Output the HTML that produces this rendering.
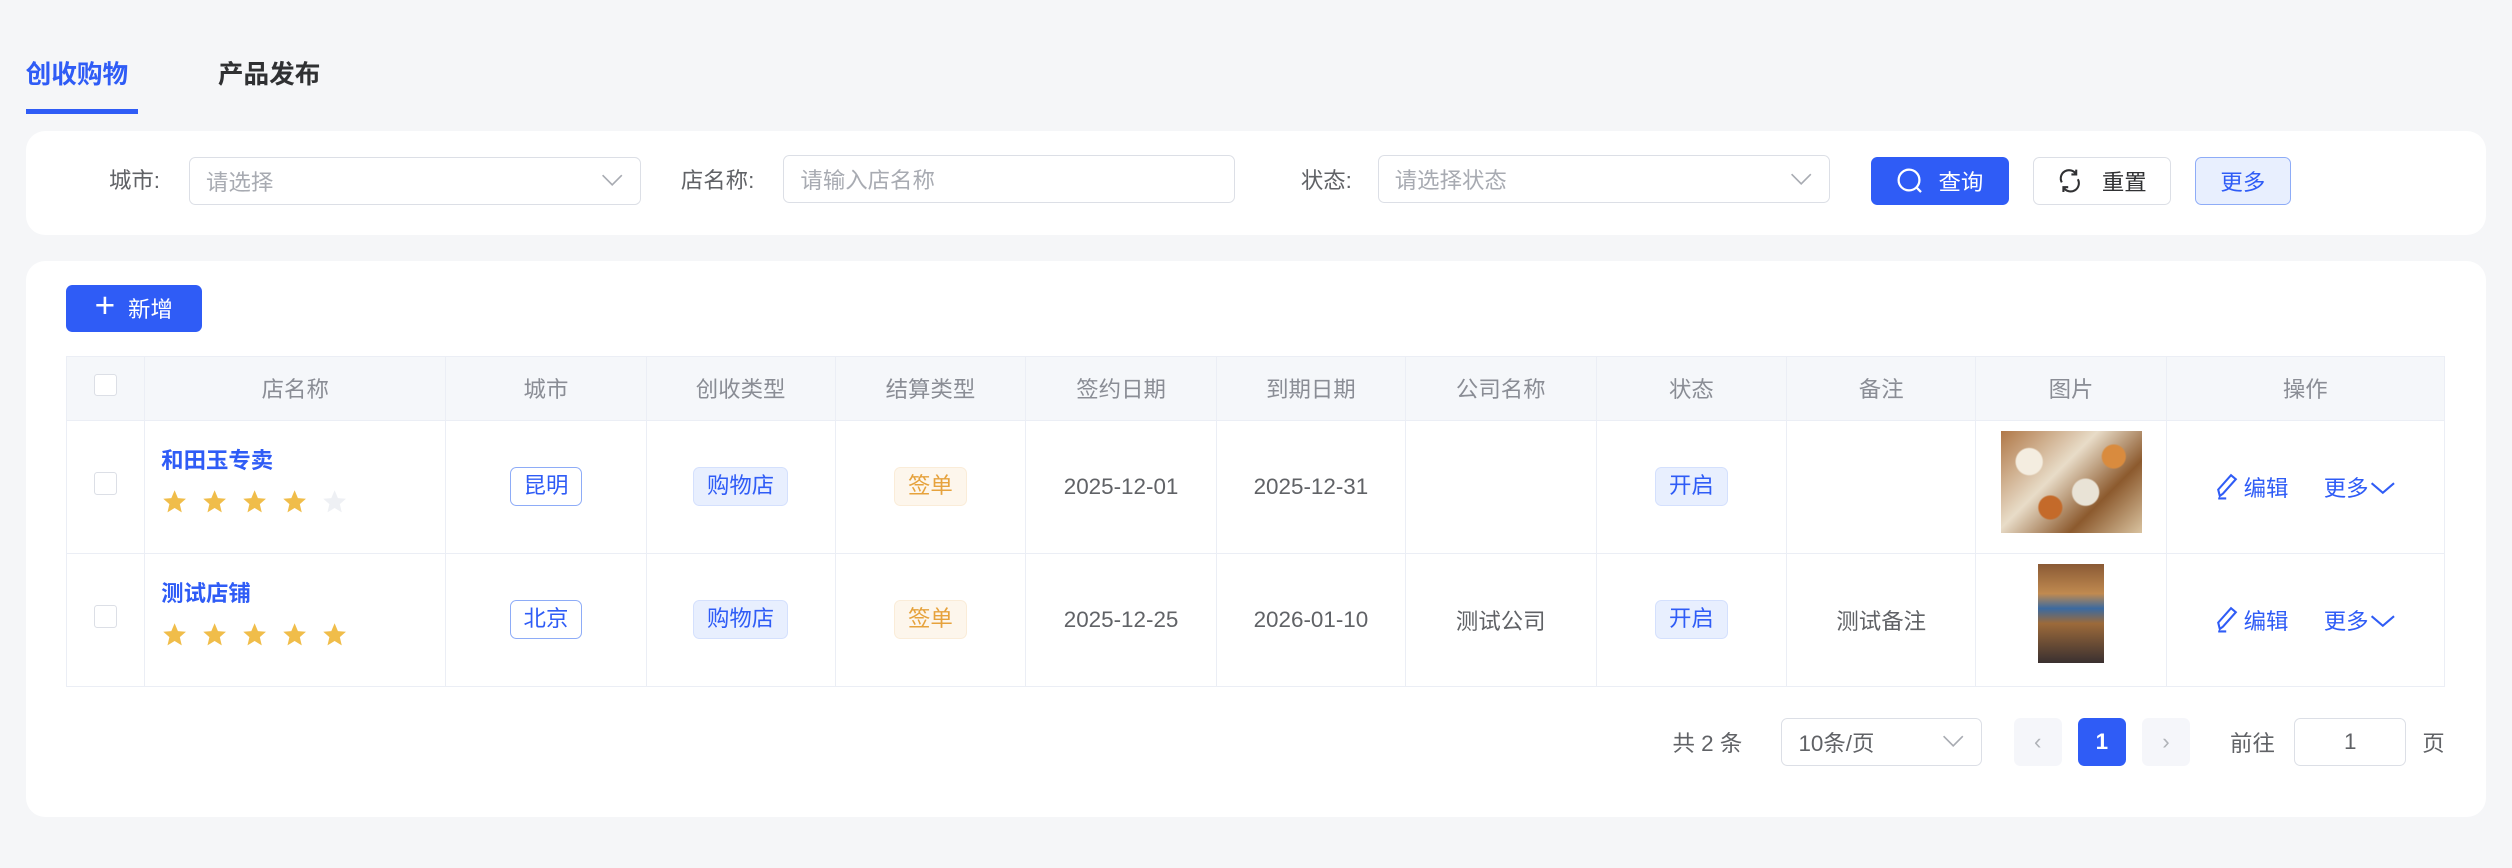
<!DOCTYPE html>
<html><head><meta charset="utf-8"><style>
*{box-sizing:border-box;margin:0;padding:0}
html,body{width:2512px;height:868px;overflow:hidden;background:#f5f6f8}
#w{zoom:1.60204;position:relative;width:1568px;height:542px;font-family:"Liberation Sans","Noto Sans CJK SC",sans-serif;font-size:14px;color:#606266}
.a{position:absolute}
.card{position:absolute;background:#fff;border-radius:12px}
.inp{position:absolute;height:30px;border:1px solid #dcdfe6;border-radius:4px;color:#a8abb2;font-size:14px;display:flex;align-items:center;padding-left:10px;background:#fff}
.chev{position:absolute;right:10px;top:9px}
.btn{position:absolute;height:30px;border-radius:4px;font-size:14px;display:flex;align-items:center;justify-content:center}
table{position:absolute;left:41px;top:222px;border-collapse:collapse;width:1485px}
td,th{border:1px solid #ebeef5;text-align:center;font-weight:normal}
th{background:#f5f7fa;color:#8a8d95;height:40px;font-size:14px}
td{height:83px;color:#606266}
.tag{display:inline-block;height:24px;line-height:22px;padding:0 8px;border-radius:4px;font-size:14px;border:1px solid}
.tb{color:#2f5cf6;border-color:#8eacf7;background:#fff}
.tl{color:#2f5cf6;border-color:#d4e0fd;background:#e8effe}
.to{color:#e6a23c;border-color:#faecd8;background:#fdf6ec}
.cb{display:inline-block;width:14px;height:14px;border:1px solid #dcdfe6;border-radius:2px;background:#fff}
.name{color:#2f5cf6;font-weight:bold;text-align:left;padding-left:10px}
.star{display:inline-block;width:17px;height:17px;margin-right:8px}
.op{color:#2f5cf6}
</style></head><body><div id="w">
<div class="a" style="left:16px;top:34px;font-size:16px;font-weight:bold;color:#2f5cf6">创收购物</div>
<div class="a" style="left:16px;top:68px;width:70px;height:3px;background:#2f5cf6"></div>
<div class="a" style="left:136px;top:34px;font-size:16px;font-weight:bold;color:#303133">产品发布</div>

<div class="card" style="left:16px;top:82px;width:1536px;height:65px"></div>
<div class="a" style="left:68px;top:102px">城市:</div>
<div class="inp" style="left:118px;top:98px;width:282px">请选择<svg class="chev" width="14" height="10" viewBox="0 0 14 10"><path d="M1 2l6 6 6-6" fill="none" stroke="#a8abb2" stroke-width="1"/></svg></div>
<div class="a" style="left:425px;top:102px">店名称:</div>
<div class="inp" style="left:489px;top:97px;width:282px">请输入店名称</div>
<div class="a" style="left:812px;top:102px">状态:</div>
<div class="inp" style="left:860px;top:97px;width:282px">请选择状态<svg class="chev" width="14" height="10" viewBox="0 0 14 10"><path d="M1 2l6 6 6-6" fill="none" stroke="#a8abb2" stroke-width="1"/></svg></div>
<div class="btn" style="left:1168px;top:98px;width:86px;background:#2f5cf6;color:#fff;border:1px solid #2f5cf6"><svg width="16" height="16" viewBox="0 0 16 16" style="margin-right:10px"><circle cx="7.5" cy="7.5" r="6.5" fill="none" stroke="#fff" stroke-width="1.4"/><path d="M12 12l3 3" stroke="#fff" stroke-width="1.4"/></svg>查询</div>
<div class="btn" style="left:1269px;top:98px;width:86px;border:1px solid #dcdfe6;color:#303133;background:#fff"><svg width="16" height="16" viewBox="0 0 16 16" style="margin-right:12px"><path d="M3 9A5 5 0 0 1 12 4M13 7A5 5 0 0 1 4 12M12 1v3H9M4 15v-3h3" fill="none" stroke="#303133" stroke-width="1.3"/></svg>重置</div>
<div class="btn" style="left:1370px;top:98px;width:60px;border:1px solid #8eacf7;background:#e8effe;color:#2f5cf6">更多</div>

<div class="card" style="left:16px;top:163px;width:1536px;height:347px"></div>
<div class="btn" style="left:41px;top:178px;width:85px;height:29px;background:#2f5cf6;color:#fff"><span style="font-size:22px;font-weight:300;margin-right:8px;margin-top:-3px">+</span>新增</div>

<table>
<tr><th style="width:49px"><span class="cb"></span></th><th style="width:188px">店名称</th><th style="width:125px">城市</th><th style="width:118px">创收类型</th><th style="width:119px">结算类型</th><th style="width:119px">签约日期</th><th style="width:118px">到期日期</th><th style="width:119px">公司名称</th><th style="width:119px">状态</th><th style="width:118px">备注</th><th style="width:119px">图片</th><th>操作</th></tr>
<tr><td><span class="cb"></span></td><td class="name"><div style="margin-top:-8px">和田玉专卖</div><div style="margin-top:8px;height:18px" class="stars">S4</div></td><td><span class="tag tb">昆明</span></td><td><span class="tag tl">购物店</span></td><td><span class="tag to">签单</span></td><td>2025-12-01</td><td>2025-12-31</td><td></td><td><span class="tag tl">开启</span></td><td></td><td><div style="width:88px;height:64px;margin:-6px auto 0;background:radial-gradient(circle at 20% 30%,#f4ede0 8px,transparent 9px),radial-gradient(circle at 60% 60%,#e9e3d6 8px,transparent 9px),radial-gradient(circle at 80% 25%,#d98b3e 7px,transparent 8px),radial-gradient(circle at 35% 75%,#c46a2a 7px,transparent 8px),linear-gradient(135deg,#b07848,#e8dcc8 40%,#8c5a2e 70%,#d9c3a0)"></div></td><td class="op">EDIT</td></tr>
<tr><td><span class="cb"></span></td><td class="name"><div style="margin-top:-8px">测试店铺</div><div style="margin-top:8px;height:18px" class="stars">S5</div></td><td><span class="tag tb">北京</span></td><td><span class="tag tl">购物店</span></td><td><span class="tag to">签单</span></td><td>2025-12-25</td><td>2026-01-10</td><td>测试公司</td><td><span class="tag tl">开启</span></td><td>测试备注</td><td><div style="width:41px;height:62px;margin:-8px auto 0;background:linear-gradient(180deg,#8a5a35,#c08a50 30%,#3b6aa0 45%,#9c6a3a 60%,#3a3030)"></div></td><td class="op">EDIT</td></tr>
</table>

<div class="a" style="left:1044px;top:453px;color:#606266">共 2 条</div>
<div class="inp" style="left:1112px;top:448px;width:125px;color:#606266">10条/页<svg class="chev" width="14" height="10" viewBox="0 0 14 10"><path d="M1 2l6 6 6-6" fill="none" stroke="#a8abb2" stroke-width="1"/></svg></div>
<div class="btn" style="left:1257px;top:448px;width:30px;background:#f5f6fa;color:#b0b3b8">‹</div>
<div class="btn" style="left:1297px;top:448px;width:30px;background:#2f5cf6;color:#fff;font-weight:bold">1</div>
<div class="btn" style="left:1337px;top:448px;width:30px;background:#f5f6fa;color:#b0b3b8">›</div>
<div class="a" style="left:1392px;top:453px">前往</div>
<div class="inp" style="left:1432px;top:448px;width:70px;color:#606266;justify-content:center;padding:0">1</div>
<div class="a" style="left:1512px;top:453px">页</div>
</div>
<script>
var st='<svg class="star" viewBox="0 0 24 24"><path d="M12 2l2.9 6.9 7.1.6-5.4 4.7 1.7 7.3L12 17.6 5.7 21.5l1.7-7.3L2 9.5l7.1-.6z" fill="C"/></svg>';
document.querySelectorAll('.stars').forEach(function(e){var n=e.textContent=='S4'?4:5,h='';for(var i=0;i<5;i++)h+=st.replace('C',i<n?'#f0bd4a':'#eef0f4');e.innerHTML=h;});
document.querySelectorAll('.op').forEach(function(e){e.innerHTML='<svg width="16" height="18" viewBox="0 0 16 18" style="vertical-align:-3px;margin-right:2px"><path d="M3 15l-1-4 8-9 3 2.5-8 9z M2 16.5h5" fill="none" stroke="#2f5cf6" stroke-width="1.3"/></svg>编辑<span style="margin-left:22px">更多</span><svg width="16" height="10" viewBox="0 0 16 10" style="margin-left:1px"><path d="M1 2l7 6 7-6" fill="none" stroke="#2f5cf6" stroke-width="1.3"/></svg>';});
</script>
</body></html>
